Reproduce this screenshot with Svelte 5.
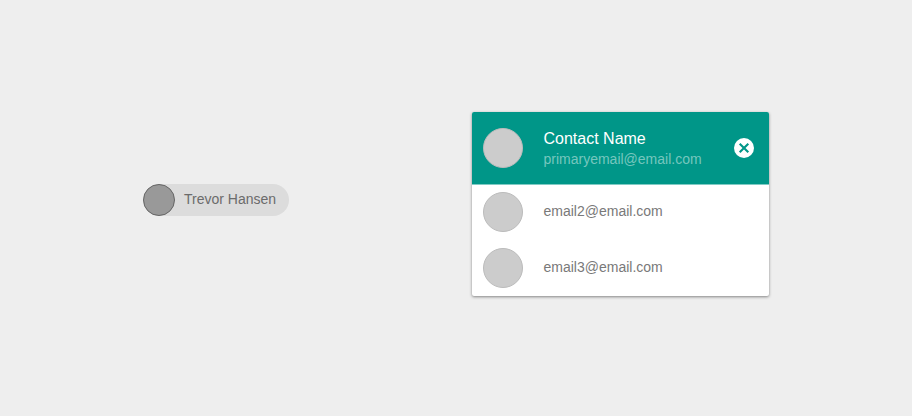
<script>
  const emails = ['email2@email.com', 'email3@email.com'];
</script>

<main>
  <section class="left">
    <div class="chip"><span class="dot"></span><span class="label">Trevor Hansen</span></div>
  </section>
  <section class="right">
    <div class="card">
      <header>
        <span class="avatar"></span>
        <div class="who">
          <div class="name">Contact Name</div>
          <div class="primary">primaryemail@email.com</div>
        </div>
        <svg width="20" height="20" viewBox="0 0 20 20" aria-label="Remove">
          <circle cx="10" cy="10" r="10" fill="#fff" />
          <path d="M5.7 5.7 14.3 14.3M14.3 5.7 5.7 14.3" stroke="#009688" stroke-width="2.1" />
        </svg>
      </header>
      {#each emails as email}
        <div class="row"><span class="avatar"></span><span class="email">{email}</span></div>
      {/each}
    </div>
  </section>
</main>

<style>
  main {
    display: flex;
    width: 912px;
    height: 416px;
    background: #eee;
    font-family: 'Liberation Sans', Arial, sans-serif;
    overflow: hidden;
  }
  .left { width: 472px; box-sizing: border-box; padding: 184px 0 0 143px; }
  .right { padding-top: 112px; }
  .chip {
    display: flex;
    align-items: center;
    width: 146px;
    height: 32px;
    border-radius: 16px;
    background: #dcdcdc;
  }
  .dot {
    box-sizing: border-box;
    width: 32px;
    height: 32px;
    border: 1px solid #666;
    border-radius: 50%;
    background: #999;
    margin-right: 9px;
  }
  .label { padding-bottom: 2px; font-size: 14px; line-height: 16px; color: #6b6b6b; white-space: nowrap; }
  .card {
    width: 297px;
    height: 184px;
    border-radius: 2px;
    background: #fff;
    box-shadow: 0 1px 3px rgba(0, 0, 0, 0.45);
    overflow: hidden;
  }
  header {
    display: flex;
    align-items: center;
    box-sizing: border-box;
    height: 73px;
    margin-bottom: -1px;
    padding: 0 15px 0 11px;
    border-bottom: 1px solid #80cbc4;
    background: #009688;
    color: #fff;
  }
  .avatar {
    box-sizing: border-box;
    flex: none;
    width: 40px;
    height: 40px;
    border: 1px solid #bbb;
    border-radius: 50%;
    background: #ccc;
  }
  .who { flex: 1; margin-left: 20.5px; padding-top: 2px; }
  .name { font-size: 16px; line-height: 20px; }
  .primary { font-size: 14px; line-height: 20px; color: #76c6be; }
  .row { display: flex; align-items: center; height: 56px; padding-left: 11px; }
  .email { margin-left: 20.5px; padding-bottom: 2px; font-size: 14px; line-height: 16px; color: #797979; }
</style>
